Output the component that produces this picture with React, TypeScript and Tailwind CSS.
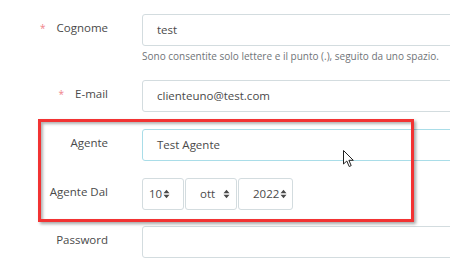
import type { ReactNode } from "react";

function UpDown() {
  return (
    <svg width="7" height="10" viewBox="0 0 7 10" aria-hidden="true">
      <path d="M0.5 4.2 L3.5 0.8 L6.5 4.2 Z M0.5 5.8 L3.5 9.2 L6.5 5.8 Z" fill="#4a4a4a" />
    </svg>
  );
}

function Row({
  label,
  required,
  help,
  className,
  children,
}: {
  label: string;
  required?: boolean;
  help?: string;
  className?: string;
  children: ReactNode;
}) {
  return (
    <div className={`flex items-start ${className ?? "mb-[17px]"}`}>
      <div className="w-[108px] shrink-0 pt-[5px] text-right text-[11.5px] leading-[18px] text-[#4a4a4a]">
        {required && <span className="mr-[11px] align-top text-[10px] text-[#f0838a]">*</span>}
        {label}
      </div>
      <div className="ml-[34px] w-[340px] shrink-0">
        {children}
        {help && (
          <p className="mt-[4px] h-[13px] text-[10px] leading-[13px] text-[#6f7478]">{help}</p>
        )}
      </div>
    </div>
  );
}

function TextInput({ value, focused }: { value: string; focused?: boolean }) {
  return (
    <div
      className={`flex h-[32px] items-center rounded-[3px] border bg-white pl-[14px] text-[11.5px] text-[#4a4a4a] ${
        focused ? "border-[#a9dde8]" : "border-[#d3dcdf]"
      }`}
    >
      {value}
    </div>
  );
}

export default function App() {
  return (
    <div className="relative h-[270px] w-[450px] overflow-hidden bg-white font-['Open_Sans',sans-serif]">
      <div className="flex flex-col pt-[14px]">
        <Row
          label="Cognome"
          required
          className="mb-[17px]"
          help="Sono consentite solo lettere e il punto (.), seguito da uno spazio."
        >
          <TextInput value="test" />
        </Row>
        <Row label="E-mail" required>
          <TextInput value="clienteuno@test.com" />
        </Row>
        <Row label="Agente">
          <TextInput value="Test Agente" focused />
        </Row>
        <Row label="Agente Dal" className="mb-[16px]">
          <div className="flex gap-[1px] text-[11.5px] text-[#4a4a4a]">
            <div className="flex h-[32px] w-[42px] items-center rounded-[3px] border border-[#d3dcdf] pl-[6px]">
              <span>10</span>
              <span className="ml-[1px]">
                <UpDown />
              </span>
            </div>
            <div className="flex h-[32px] w-[52px] items-center rounded-[3px] border border-[#d3dcdf] pl-[14px]">
              <span>ott</span>
              <span className="ml-[8px]">
                <UpDown />
              </span>
            </div>
            <div className="flex h-[32px] w-[55px] items-center rounded-[3px] border border-[#d3dcdf] pl-[14px]">
              <span>2022</span>
              <span className="ml-[1px]">
                <UpDown />
              </span>
            </div>
          </div>
        </Row>
        <Row label="Password">
          <TextInput value="" />
        </Row>
      </div>

      {/* annotation box */}
      <div className="absolute left-[38px] top-[119px] h-[103px] w-[376px] border-[3px] border-[#f23333] shadow-[2px_2px_3px_rgba(0,0,0,0.35),inset_2px_2px_3px_rgba(0,0,0,0.3)]" />

      {/* mouse cursor */}
      <svg className="absolute left-[343px] top-[150px]" width="13" height="18" viewBox="0 0 13 18" aria-hidden="true">
        <path
          d="M0.5 0.5 L0.5 14 L3.8 11 L6.2 16.5 L8.2 15.6 L5.9 10.3 L10.3 10.3 Z"
          fill="#fff"
          stroke="#222"
          strokeWidth="1"
          strokeLinejoin="round"
        />
      </svg>
    </div>
  );
}
